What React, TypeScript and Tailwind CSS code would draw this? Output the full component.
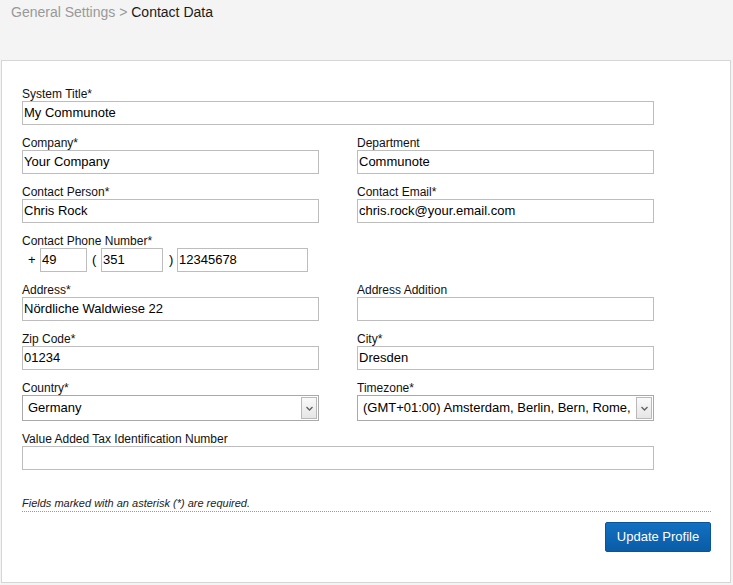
import React from "react";

const font = { fontFamily: '"Liberation Sans", Arial, sans-serif' };

function Label({ children }: { children: React.ReactNode }) {
  return <div className="h-[14px] text-[12px] leading-[14px] text-[#111]">{children}</div>;
}

function TextInput({ value, className = "" }: { value: string; className?: string }) {
  return (
    <div
      className={`h-[24px] border border-[#bdbdbd] bg-white pl-[1px] text-[13px] leading-[22px] text-black overflow-hidden whitespace-nowrap ${className}`}
    >
      {value}
    </div>
  );
}

function Select({ value }: { value: string }) {
  return (
    <div className="flex h-[26px] w-[297px] items-stretch border border-[#a9a9a9] bg-white">
      <div className="flex-1 overflow-hidden whitespace-nowrap pl-[5px] text-[13px] leading-[24px] text-black">
        {value}
      </div>
      <div className="my-px mr-px flex w-[16px] items-center justify-center border border-[#b9b9b9] bg-gradient-to-b from-[#fafafa] to-[#e6e6e6]">
        <svg width="7" height="5" viewBox="0 0 7 5">
          <path d="M0.5 1 L3.5 4 L6.5 1" fill="none" stroke="#606060" strokeWidth="1.3" />
        </svg>
      </div>
    </div>
  );
}

function Field({ label, children }: { label: string; children: React.ReactNode }) {
  return (
    <div className="mb-[11px]">
      <Label>{label}</Label>
      {children}
    </div>
  );
}

export default function App() {
  return (
    <div className="min-h-[585px] w-[733px] bg-[#f4f4f4]" style={font}>
      {/* Breadcrumb */}
      <div className="h-[60px] pl-[11px] pt-[3px] text-[14px] leading-[18px]">
        <span className="text-[#999]">General Settings &gt; </span>
        <span className="text-[#1a1a1a]">Contact Data</span>
      </div>

      {/* Card */}
      <div className="ml-px w-[730px] h-[523px] border border-[#d6d6d6] bg-white pl-[20px] pr-[19px] pt-[26px]">
        <Field label="System Title*">
          <TextInput value="My Communote" className="w-[632px]" />
        </Field>

        <div className="grid grid-cols-[297px_297px] gap-x-[38px]">
          <Field label="Company*">
            <TextInput value="Your Company" />
          </Field>
          <Field label="Department">
            <TextInput value="Communote" />
          </Field>
          <Field label="Contact Person*">
            <TextInput value="Chris Rock" />
          </Field>
          <Field label="Contact Email*">
            <TextInput value="chris.rock@your.email.com" />
          </Field>
        </div>

        <Field label="Contact Phone Number*">
          <div className="flex h-[24px] items-center text-[13px] text-black">
            <span className="ml-[6px] w-[12px]">+</span>
            <TextInput value="49" className="w-[47px]" />
            <span className="ml-[5px] w-[9px]">(</span>
            <TextInput value="351" className="w-[62px]" />
            <span className="ml-[6px] w-[8px]">)</span>
            <TextInput value="12345678" className="w-[131px]" />
          </div>
        </Field>

        <div className="grid grid-cols-[297px_297px] gap-x-[38px]">
          <Field label="Address*">
            <TextInput value="Nördliche Waldwiese 22" />
          </Field>
          <Field label="Address Addition">
            <TextInput value="" />
          </Field>
          <Field label="Zip Code*">
            <TextInput value="01234" />
          </Field>
          <Field label="City*">
            <TextInput value="Dresden" />
          </Field>
          <Field label="Country*">
            <Select value="Germany" />
          </Field>
          <Field label="Timezone*">
            <Select value="(GMT+01:00) Amsterdam, Berlin, Bern, Rome," />
          </Field>
        </div>

        <Field label="Value Added Tax Identification Number">
          <TextInput value="" className="w-[632px]" />
        </Field>

        <div className="mt-[26px] w-[689px] border-b border-dotted border-[#9a9a9a] pb-px text-[11px] italic leading-[14px] text-[#222]">
          Fields marked with an asterisk (*) are required.
        </div>

        <div className="mt-[10px] flex w-[689px] justify-end">
          <button className="h-[30px] w-[106px] rounded-[2px] border border-[#0a5597] bg-gradient-to-b from-[#1271c2] to-[#0a5ca6] text-[13px] text-white">
            Update Profile
          </button>
        </div>
      </div>
    </div>
  );
}
